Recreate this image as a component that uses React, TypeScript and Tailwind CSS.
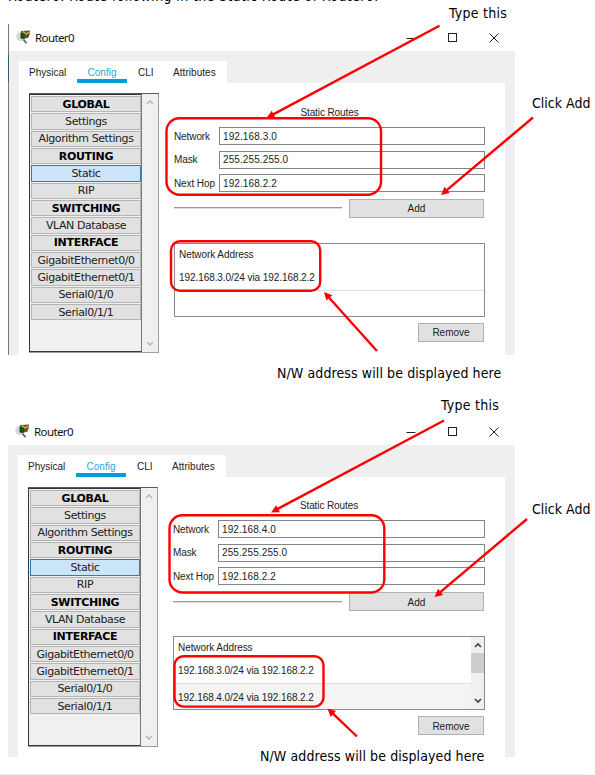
import React from "react";

const sections = [
  ["GLOBAL", true],
  ["Settings", false],
  ["Algorithm Settings", false],
  ["ROUTING", true],
  ["Static", false],
  ["RIP", false],
  ["SWITCHING", true],
  ["VLAN Database", false],
  ["INTERFACE", true],
  ["GigabitEthernet0/0", false],
  ["GigabitEthernet0/1", false],
  ["Serial0/1/0", false],
  ["Serial0/1/1", false],
] as const;

function Chevron({ up, color }: { up?: boolean; color: string }) {
  return (
    <svg width="8" height="6" viewBox="0 0 8 6" fill="none">
      <path d={up ? "M1 5 4 2 7 5" : "M1 1 4 4 7 1"} stroke={color} strokeWidth="1.7" />
    </svg>
  );
}

function RouterIcon() {
  return (
    <svg width="16" height="15" viewBox="0 0 16 15" className="shrink-0">
      <ellipse cx="5" cy="6.5" rx="4.7" ry="4.7" fill="#d3d7d5" />
      <path d="M5 1 14 .5 13.500 5 12 8 5 9Z" fill="#68551f" />
      <path d="M7 1.500 10 4 13.500 2" stroke="#d9b45c" strokeWidth="1.300" fill="none" />
      <path d="M4.500 3 9 3.800 8.500 9 4.500 8Z" fill="#0c5420" />
      <path d="m7.500 9.500 3 3.800" stroke="#555" strokeWidth="1.500" />
    </svg>
  );
}

function TitleBar() {
  return (
    <div className="flex h-[27px] items-center pl-[7px] pr-[15px]">
      <RouterIcon />
      <span className="ml-[3px] flex-1 font-['Noto_Sans',sans-serif] text-[11.5px] leading-none tracking-[-0.6px] text-[#111]">Router0</span>
      <svg width="95" height="12" viewBox="0 0 95 12" fill="none" stroke="#222" strokeWidth="1">
        <path d="M1.500 6.500h9" />
        <rect x="43.500" y="1.500" width="8" height="8" />
        <path d="m84.500 1.500 9 9m0-9-9 9" />
      </svg>
    </div>
  );
}

function Tabs() {
  return (
    <div className="ml-[10px] mt-[10px] flex h-[22px] w-[208px] bg-white pl-[10px] text-[10px] leading-[23px]">
      <span className="w-[48px]">Physical</span>
      <span className="h-[22px] w-[50px] border-b-4 border-[#049fd9] text-center text-[#2aa5d8]">Config</span>
      <span className="w-[36px] pl-[11px]">CLI</span>
      <span className="pl-[10px] tracking-[0.05px]">Attributes</span>
    </div>
  );
}

function Sidebar() {
  return (
    <div className="flex h-[260px] w-[130px] border border-l-0 border-[#9a9da5] border-t-[#55585d] bg-[#f0f0f0]">
      <div className="flex w-[113px] flex-col gap-px border border-[#35373c] border-r-[#777] pl-px pt-px font-['DejaVu_Sans',sans-serif] text-[11px]">
        {sections.map(([name, head]) => (
          <div
            key={name}
            className={
              "flex h-[16.35px] shrink-0 items-center justify-center whitespace-nowrap border leading-none " +
              (name === "Static" ? "border-[#3579b5] bg-[#cce4f7] " : "border-[#b5b5b5] bg-[#e1e1e1] ") +
              (head ? "font-bold text-black tracking-[-0.3px]" : "text-[#222] tracking-[-0.42px]")
            }
          >
            {name}
          </div>
        ))}
      </div>
      <div className="flex flex-1 flex-col items-center justify-between py-[5px]">
        <Chevron up color="#bcbcbc" />
        <Chevron color="#bcbcbc" />
      </div>
    </div>
  );
}

function Field({ label, value }: { label: string; value: string }) {
  return (
    <div className="flex h-[18px] items-center">
      <span className="w-[45px] shrink-0 whitespace-nowrap pt-px tracking-[-0.1px]">{label}</span>
      <span className="flex h-[18px] flex-1 items-center border border-[#858585] pl-[3px] pt-px tracking-[0.1px]">{value}</span>
    </div>
  );
}

function RouteForm({ network, routes, wide }: { network: string; routes: string[]; wide: boolean }) {
  const scroll = routes.length > 1;
  return (
    <div className={"ml-[15px] text-[10px] leading-none text-[#222] " + (wide ? "w-[312px] pt-[13px]" : "w-[311px] pt-[14px]")}>
      <div className="h-[20px] pt-px text-center tracking-[-0.1px]">Static Routes</div>
      <div className="flex flex-col gap-[5.7px]">
        <Field label="Network" value={network} />
        <Field label="Mask" value="255.255.255.0" />
        <Field label="Next Hop" value="192.168.2.2" />
      </div>
      <div className={"flex h-[19px] items-center gap-[7px] pr-px " + (wide ? "mt-[7px]" : "mt-[6.6px]")}>
        <div className="h-[2px] flex-1 border-t border-[#999] bg-[#ddd]" />
        <div className="flex h-[19px] w-[135px] items-center justify-center border border-[#b0b0b0] bg-[#e1e1e1] pt-[2px]">Add</div>
      </div>
      <div className="mt-[25px] flex h-[74px] border border-[#858a93] tracking-[-0.07px]">
        <div className="flex flex-1 flex-col">
          <div className="h-[22px] pl-[4px] pt-[6px]">Network Address</div>
          <div className="h-[25px] border-b border-[#e0e0e0] pl-[4px] pt-[7px]">{routes[0]}</div>
          <div className={"flex-1 pl-[4px] pt-[9px] " + (scroll ? "bg-[#f4f4f4]" : "bg-white")}>{routes[1]}</div>
        </div>
        {scroll && (
          <div className="flex w-[13px] flex-col items-center bg-[#f0f0f0]">
            <div className="flex h-[16px] items-center"><Chevron up color="#444" /></div>
            <div className="h-[20px] w-full bg-[#cdcdcd]" />
            <div className="flex flex-1 items-end pb-[5px]"><Chevron color="#444" /></div>
          </div>
        )}
      </div>
      <div className="mt-[6px] flex justify-end pr-px">
        <div className="flex h-[19px] w-[66px] items-center justify-center border border-[#b0b0b0] bg-[#e1e1e1] pt-[2px]">Remove</div>
      </div>
    </div>
  );
}

function RouterWindow({ network, routes, second = false }: { network: string; routes: string[]; second?: boolean }) {
  return (
    <div
      className={
        "ml-[8px] w-[507px] shrink-0 font-['Liberation_Sans',Arial,sans-serif] text-[#222] [font-stretch:normal] " +
        (second ? "h-[339px]" : "h-[331px] border-l border-[#777]")
      }
    >
      <TitleBar />
      <div className={"overflow-hidden bg-[#efefef] " + (second ? "h-[312px]" : "h-[304px]")}>
        <Tabs />
        <div className="ml-[10px] mr-[10px] flex h-[290px] items-start bg-white pl-[10px] pt-[10px]">
          <Sidebar />
          <RouteForm network={network} routes={routes} wide={second} />
        </div>
      </div>
    </div>
  );
}

function Arrow({ x1, y1, x2, y2 }: { x1: number; y1: number; x2: number; y2: number }) {
  const angle = (Math.atan2(y2 - y1, x2 - x1) * 180) / Math.PI;
  const length = Math.hypot(x2 - x1, y2 - y1);
  return (
    <g transform={`translate(${x2} ${y2}) rotate(${angle})`}>
      <path d={`M${-length} 0H-6`} stroke="#f00" strokeWidth="2.4" />
      <path d="M0 0-8-4v8Z" fill="#f00" />
    </g>
  );
}

function Callouts() {
  return (
    <svg className="absolute inset-0" width="595" height="775" fill="none">
      <path d="M8.500 55v27" stroke="#2d5f70" />
      <g stroke="#f00" strokeWidth="2.4">
        <rect x="166.5" y="118.200" width="214.500" height="76.500" rx="13" />
        <rect x="171" y="241.300" width="149.200" height="49.500" rx="9" />
        <rect x="169.500" y="515.300" width="214.800" height="77.200" rx="13" />
        <rect x="174.500" y="656.300" width="149" height="50.300" rx="9" />
      </g>
      <Arrow x1={439.5} y1={25.7} x2={266.5} y2={118} />
      <Arrow x1={533} y1={117.5} x2={441} y2={195} />
      <Arrow x1={377} y1={351} x2={324} y2={292} />
      <Arrow x1={444} y1={420.5} x2={271} y2={512.5} />
      <Arrow x1={527} y1={519} x2={434.5} y2={597} />
      <Arrow x1={357} y1={736.5} x2={327.5} y2={708.5} />
    </svg>
  );
}

const label = "absolute whitespace-nowrap text-[14px] leading-[16px]";

export default function App() {
  return (
    <main className="relative flex h-[775px] w-[595px] flex-col overflow-hidden bg-white font-['DejaVu_Sans_Condensed','DejaVu_Sans',sans-serif] text-black [font-stretch:condensed]">
      <div className="flex h-[24px] items-start pl-[8px] text-[14px] leading-[16px]">
        <span className="-mt-[12px] whitespace-nowrap tracking-[0.38px]">Router0. Route following in the Static Route of Router0.</span>
      </div>
      <RouterWindow network="192.168.3.0" routes={["192.168.3.0/24 via 192.168.2.2"]} />
      <div className="h-[63px] shrink-0" />
      <RouterWindow second network="192.168.4.0" routes={["192.168.3.0/24 via 192.168.2.2", "192.168.4.0/24 via 192.168.2.2"]} />
      <div className="mt-[17px] h-px w-[590px] bg-[#edf0f8]" />
      <Callouts />
      <span className={label + " left-[449px] top-[5px] tracking-[0.25px]"}>Type this</span>
      <span className={label + " left-[532px] top-[95px]"}>Click Add</span>
      <span className={label + " left-[277px] top-[365px] tracking-[0.1px]"}>N/W address will be displayed here</span>
      <span className={label + " left-[441px] top-[397px] tracking-[0.25px]"}>Type this</span>
      <span className={label + " left-[532px] top-[501px]"}>Click Add</span>
      <span className={label + " left-[260px] top-[748px] tracking-[0.1px]"}>N/W address will be displayed here</span>
    </main>
  );
}
